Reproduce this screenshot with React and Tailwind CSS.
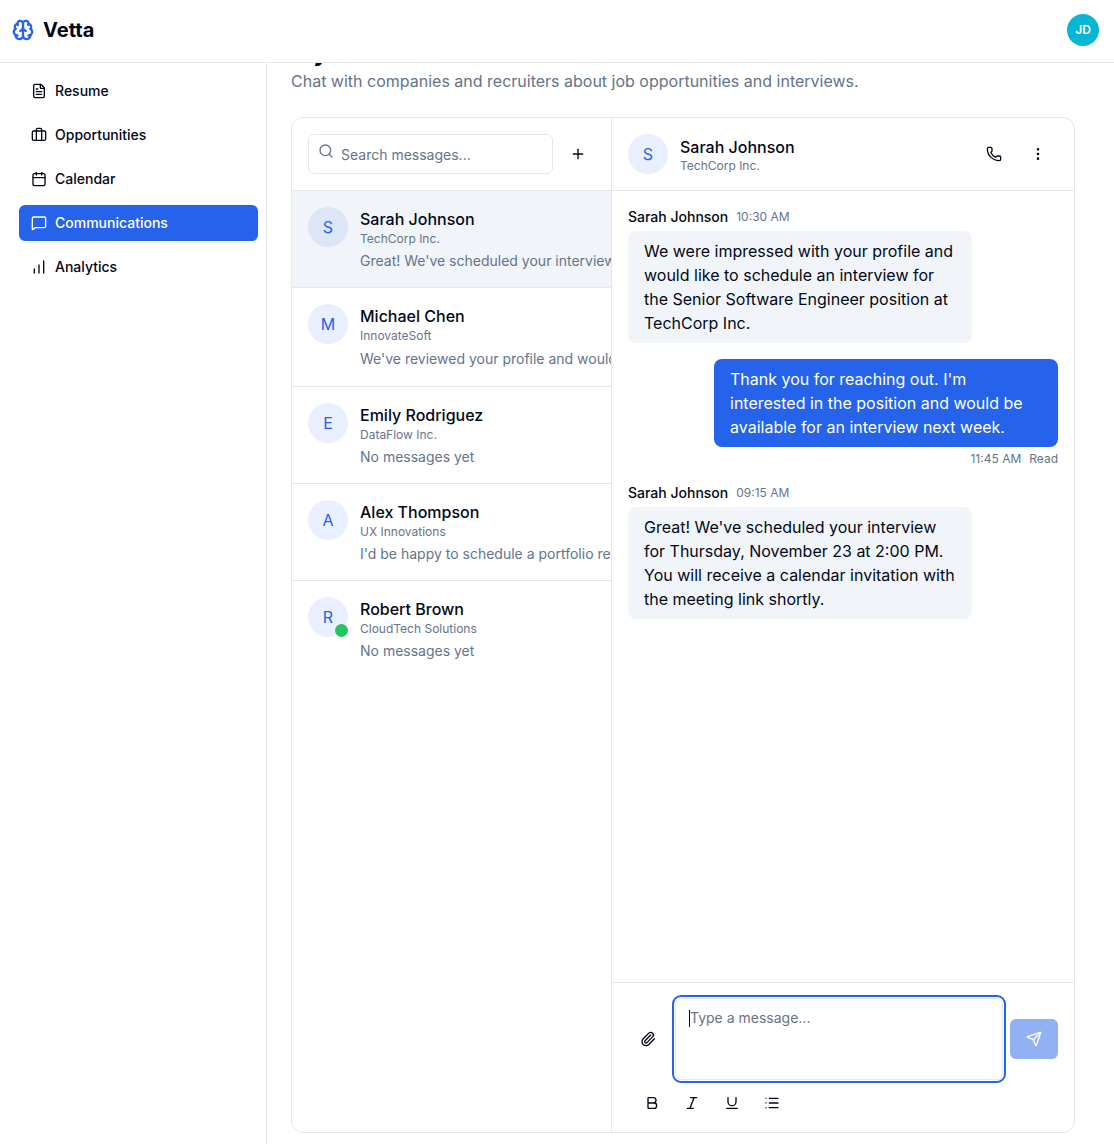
import {
  Brain,
  FileText,
  Briefcase,
  Calendar,
  MessageSquare,
  ChartNoAxesColumnIncreasing,
  Search,
  Plus,
  Phone,
  EllipsisVertical,
  Paperclip,
  Send,
  Bold,
  Italic,
  Underline,
  List,
} from "lucide-react";

const NAV = [
  { label: "Resume", icon: FileText },
  { label: "Opportunities", icon: Briefcase },
  { label: "Calendar", icon: Calendar },
  { label: "Communications", icon: MessageSquare, active: true },
  { label: "Analytics", icon: ChartNoAxesColumnIncreasing },
];

const CONVERSATIONS = [
  { name: "Sarah Johnson", company: "TechCorp Inc.", preview: "Great! We've scheduled your interview for Thursday, November 23", active: true },
  { name: "Michael Chen", company: "InnovateSoft", preview: "We've reviewed your profile and would like to talk about a role", tall: true },
  { name: "Emily Rodriguez", company: "DataFlow Inc.", preview: "No messages yet" },
  { name: "Alex Thompson", company: "UX Innovations", preview: "I'd be happy to schedule a portfolio review with you next week" },
  { name: "Robert Brown", company: "CloudTech Solutions", preview: "No messages yet", online: true, last: true },
];

function Avatar({ letter, online }) {
  return (
    <div className="relative flex h-10 w-10 shrink-0 items-center justify-center rounded-full bg-[#2563eb]/10 text-base text-[#2563eb]">
      {letter}
      {online && (
        <span className="absolute right-0 bottom-0 h-[13px] w-[13px] rounded-full bg-[#22c55e]" />
      )}
    </div>
  );
}

function Conversation({ name, company, preview, active, online, tall, last }) {
  return (
    <div
      className={`flex gap-3 px-4 pt-4 ${tall ? "pb-[17px]" : "pb-4"} ${last ? "" : "border-b border-[#e2e8f0]"} ${
        active ? "bg-[#f1f5f9]" : ""
      }`}
    >
      <Avatar letter={name[0]} online={online} />
      <div className="min-w-0 flex-1">
        <div className="text-base leading-6 font-medium text-[#020817]">{name}</div>
        <div className="text-xs leading-4 text-[#64748b]">{company}</div>
        <div className={`text-sm leading-5 whitespace-nowrap text-[#64748b] ${tall ? "mt-[5px]" : "mt-1"}`}>
          {preview}
        </div>
      </div>
    </div>
  );
}

function Incoming({ time, children }) {
  return (
    <div>
      <div className="flex h-[18px] items-center gap-2">
        <span className="text-sm font-medium text-[#020817]">Sarah Johnson</span>
        <span className="text-xs text-[#64748b]">{time}</span>
      </div>
      <div className="mt-[5px] w-[344px] rounded-lg bg-[#f1f5f9] px-4 py-2 text-base leading-6 text-[#020817]">
        {children}
      </div>
    </div>
  );
}

export default function App() {
  return (
    <div className="flex h-[1144px] w-full flex-col overflow-hidden bg-white font-['Inter',sans-serif] text-[#020817]">
      <header className="flex h-[63px] shrink-0 items-center justify-between border-b border-[#e2e8f0] pr-[15px] pb-[2px] pl-3">
        <div className="flex items-center gap-[9px]">
          <Brain size={22} strokeWidth={2.5} className="text-[#2563eb]" />
          <span className="text-xl font-bold">Vetta</span>
        </div>
        <div className="flex h-8 w-8 items-center justify-center rounded-full bg-[#06b6d4] text-xs font-semibold text-white">
          JD
        </div>
      </header>

      <div className="flex min-h-0 flex-1">
        <aside className="w-[267px] shrink-0 border-r border-[#e2e8f0] pt-[10px] pr-2 pl-[19px]">
          <nav className="flex flex-col gap-2">
            {NAV.map(({ label, icon: Icon, active }) => (
              <div
                key={label}
                className={`flex h-9 items-center gap-2 rounded-md px-3 text-sm font-medium ${
                  active ? "bg-[#2563eb] text-white" : "text-[#020817]"
                }`}
              >
                <Icon size={16} />
                {label}
              </div>
            ))}
          </nav>
        </aside>

        <main className="min-w-0 flex-1 overflow-hidden px-6">
          <div className="-mt-[26px]">
            <h1 className="text-2xl leading-8 font-bold">My Communications</h1>
            <p className="text-base leading-6 text-[#64748b]">
              Chat with companies and recruiters about job opportunities and interviews.
            </p>
          </div>

          <div className="mt-6 flex h-[1016px] w-[784px] overflow-hidden rounded-xl border border-[#e2e8f0]">
            <div className="w-[320px] shrink-0 overflow-hidden border-r border-[#e2e8f0]">
              <div className="flex h-[73px] w-[340px] items-center gap-[5px] border-b border-[#e2e8f0] px-4">
                <div className="relative h-10 w-[245px] shrink-0 rounded-md border border-[#e2e8f0]">
                  <Search size={16} className="absolute top-[8px] left-[9px] text-[#64748b]" />
                  <input
                    placeholder="Search messages..."
                    className="h-full w-full rounded-md pl-8 text-sm text-[#020817] outline-none placeholder:text-[#64748b]"
                  />
                </div>
                <button className="flex h-10 w-10 shrink-0 items-center justify-center text-[#020817]">
                  <Plus size={16} />
                </button>
              </div>
              <div className="w-[340px]">
                {CONVERSATIONS.map((c) => (
                  <Conversation key={c.name} {...c} />
                ))}
              </div>
            </div>

            <div className="flex min-w-0 flex-1 flex-col">
              <div className="flex h-[73px] shrink-0 items-center gap-3 border-b border-[#e2e8f0] px-4">
                <Avatar letter="S" />
                <div className="flex-1 pt-px">
                  <div className="text-base leading-6 font-medium">Sarah Johnson</div>
                  <div className="-mt-px text-xs leading-4 text-[#64748b]">TechCorp Inc.</div>
                </div>
                <div className="flex gap-1">
                  <button className="flex h-10 w-10 items-center justify-center">
                    <Phone size={16} />
                  </button>
                  <button className="flex h-10 w-10 items-center justify-center">
                    <EllipsisVertical size={16} />
                  </button>
                </div>
              </div>

              <div className="flex min-h-0 flex-1 flex-col px-4 pt-[17px]">
                <Incoming time="10:30 AM">
                  We were impressed with your profile and would like to schedule an interview for the Senior Software
                  Engineer position at TechCorp Inc.
                </Incoming>
                <div className="mt-4 flex flex-col items-end">
                  <div className="w-[344px] rounded-lg bg-[#2563eb] px-4 py-2 text-base leading-6 text-white">
                    Thank you for reaching out. I'm interested in the position and would be available for an interview
                    next week.
                  </div>
                  <div className="mt-[3px] flex gap-2 text-xs leading-[18px] text-[#64748b]">
                    <span>11:45 AM</span>
                    <span>Read</span>
                  </div>
                </div>
                <div className="mt-4">
                  <Incoming time="09:15 AM">
                    Great! We've scheduled your interview for Thursday, November 23 at 2:00 PM. You will receive a
                    calendar invitation with the meeting link shortly.
                  </Incoming>
                </div>
              </div>

              <div className="h-[150px] shrink-0 border-t border-[#e2e8f0] px-4 pt-3">
                <div className="flex items-center">
                  <button className="flex h-10 w-10 shrink-0 items-center justify-center">
                    <Paperclip size={16} />
                  </button>
                  <div className="relative ml-1 h-[88px] w-[334px] shrink-0 rounded-[9px] border-2 border-[#2563eb] p-[1px]">
                    <textarea
                      placeholder="Type a message..."
                      className="block h-full w-full resize-none rounded-md border border-[#e2e8f0] px-[14px] py-[9px] text-sm leading-5 outline-none placeholder:text-[#64748b]"
                    />
                    <span className="absolute top-[13px] left-[15px] h-[17px] w-px bg-[#020817]" />
                  </div>
                  <button className="ml-1 flex h-10 w-12 shrink-0 items-center justify-center rounded-md bg-[#2563eb]/50 text-white">
                    <Send size={16} />
                  </button>
                </div>
                <div className="ml-1 flex">
                  {[Bold, Italic, Underline, List].map((Icon, i) => (
                    <button key={i} className="flex h-10 w-10 items-center justify-center">
                      <Icon size={16} />
                    </button>
                  ))}
                </div>
              </div>
            </div>
          </div>
        </main>
      </div>
    </div>
  );
}
